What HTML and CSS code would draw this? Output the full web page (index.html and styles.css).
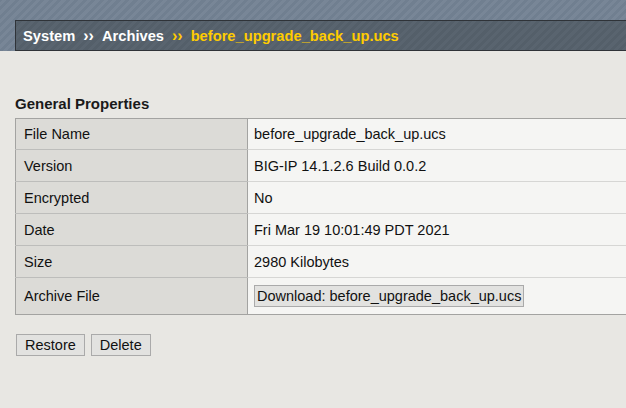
FILE: index.html
```html
<!DOCTYPE html>
<html>
<head>
<meta charset="utf-8">
<link rel="stylesheet" href="styles.css">
</head>
<body>
<div class="header">
  <div class="crumbs">
    <span class="crumb">System</span>
    <span class="sep">››</span>
    <span class="crumb">Archives</span>
    <span class="sep cur">››</span>
    <span class="crumb cur">before_upgrade_back_up.ucs</span>
  </div>
</div>
<div class="content">
  <div class="section-title">General Properties</div>
  <table class="props">
    <tr><td class="label">File Name</td><td class="value">before_upgrade_back_up.ucs</td></tr>
    <tr><td class="label">Version</td><td class="value">BIG-IP 14.1.2.6 Build 0.0.2</td></tr>
    <tr><td class="label">Encrypted</td><td class="value">No</td></tr>
    <tr><td class="label">Date</td><td class="value">Fri Mar 19 10:01:49 PDT 2021</td></tr>
    <tr><td class="label">Size</td><td class="value">2980 Kilobytes</td></tr>
    <tr class="tall"><td class="label">Archive File</td><td class="value"><button class="btn">Download: before_upgrade_back_up.ucs</button></td></tr>
  </table>
  <div class="actions">
    <button class="btn">Restore</button>
    <button class="btn">Delete</button>
  </div>
</div>
</body>
</html>
```
FILE: styles.css
```css
html, body {
  margin: 0;
  padding: 0;
  background: #e8e7e3;
  overflow: hidden;
  font-family: "Liberation Sans", Arial, sans-serif;
}
.header {
  height: 51px;
  background-color: #738293;
  background-image: repeating-linear-gradient(-45deg, rgba(255,255,255,0.035) 0 3px, rgba(0,0,0,0.025) 3px 6px);
  padding-top: 20px;
  box-sizing: border-box;
}
.crumbs {
  margin-left: 15px;
  height: 31px;
  box-sizing: border-box;
  border: 1px solid #2f3338;
  border-right: none;
  background-color: #56616c;
  background-image: repeating-linear-gradient(-45deg, rgba(255,255,255,0.02) 0 3px, rgba(0,0,0,0.025) 3px 6px);
  display: flex;
  align-items: center;
  padding-left: 7px;
  padding-top: 1px;
  font-family: "Liberation Sans", Arial, sans-serif;
  font-weight: bold;
  font-size: 14.7px;
  color: #ffffff;
  gap: 8px;
}
.sep { font-size: 16px; }
.cur { color: #ffcc00; }
.content {
  padding: 44px 0 0 15px;
}
.section-title {
  font-weight: bold;
  font-size: 15px;
  color: #1a1a1a;
  height: 23px;
}
.props {
  border-collapse: collapse;
  width: 640px;
  font-size: 14.5px;
  color: #111;
  border-top: 1px solid #a3a3a1;
  border-left: 1px solid #a3a3a1;
}
.props td {
  height: 32px;
  padding: 0 0 0 8px;
  border-bottom: 1px solid #d6d6d4;
  box-sizing: border-box;
}
.props .label { border-bottom-color: #bdbdbb; }
.props tr:first-child td { height: 31px; }
.props tr:last-child td { border-bottom: 1px solid #a3a3a1; height: 37px; }
.props .label {
  width: 232px;
  background: #dcdbd7;
  border-right: 1px solid #a3a3a1;
}
.props .value {
  background: #f5f5f3;
  padding-left: 6px;
}
.btn {
  font-family: "Liberation Sans", Arial, sans-serif;
  font-size: 14.5px;
  color: #111;
  background: #e2e2e0;
  border: 1px solid #aaa;
  padding: 0 8px;
  height: 22px;
  margin: 0;
}
.props .btn { padding: 0 2px; }
.actions {
  margin-top: 19px;
  margin-left: 1px;
  display: flex;
  gap: 6px;
}
```
